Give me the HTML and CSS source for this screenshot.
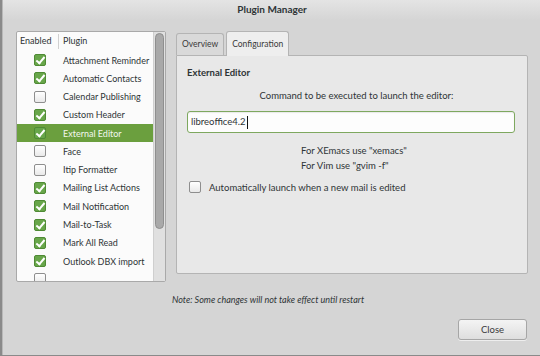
FILE: index.html
```
<!DOCTYPE html>
<html lang="en">
<head>
  <meta charset="UTF-8" />
  <title>Plugin Manager</title>
  <link rel="stylesheet" href="styles.css">
</head>
<body>
  <div class="window">
    <div class="titlebar">Plugin Manager</div>
    <div class="content">
      <div class="plugin-list">
        <div class="list-body">
          <div class="list-head">
            <div class="col-enabled">Enabled</div>
            <div class="col-plugin">Plugin</div>
          </div>
          <div class="row"><span class="cell-check"><span class="check on"></span></span><span>Attachment Reminder</span></div>
          <div class="row"><span class="cell-check"><span class="check on"></span></span><span>Automatic Contacts</span></div>
          <div class="row"><span class="cell-check"><span class="check"></span></span><span>Calendar Publishing</span></div>
          <div class="row"><span class="cell-check"><span class="check on"></span></span><span>Custom Header</span></div>
          <div class="row selected"><span class="cell-check"><span class="check on"></span></span><span>External Editor</span></div>
          <div class="row"><span class="cell-check"><span class="check"></span></span><span>Face</span></div>
          <div class="row"><span class="cell-check"><span class="check"></span></span><span>Itip Formatter</span></div>
          <div class="row"><span class="cell-check"><span class="check on"></span></span><span>Mailing List Actions</span></div>
          <div class="row"><span class="cell-check"><span class="check on"></span></span><span>Mail Notification</span></div>
          <div class="row"><span class="cell-check"><span class="check on"></span></span><span>Mail-to-Task</span></div>
          <div class="row"><span class="cell-check"><span class="check on"></span></span><span>Mark All Read</span></div>
          <div class="row"><span class="cell-check"><span class="check on"></span></span><span>Outlook DBX import</span></div>
          <div class="row"><span class="cell-check"><span class="check"></span></span></div>
        </div>
        <div class="scrollbar"><div class="thumb"></div></div>
      </div>
      <div class="notebook">
        <div class="tabs">
          <div class="tab">Overview</div>
          <div class="tab active">Configuration</div>
        </div>
        <div class="page">
          <div class="section-title">External Editor</div>
          <div class="centered">Command to be executed to launch the editor:</div>
          <div class="entry">libreoffice4.2<span class="caret"></span></div>
          <div class="hints">
            <div>For XEmacs use "xemacs"</div>
            <div>For Vim use "gvim -f"</div>
          </div>
          <label class="option"><span class="check"></span>Automatically launch when a new mail is edited</label>
        </div>
      </div>
    </div>
    <div class="note">Note: Some changes will not take effect until restart</div>
    <div class="footer">
      <button class="btn">Close</button>
    </div>
  </div>
</body>
</html>
```

FILE: styles.css
```
:root {
  --color-window: #d5d5d5;
  --color-page: #e8e8e8;
  --color-border: #a9a9a9;
  --color-text: #2e3436;
  --color-green: #6b9f3e;
  --color-check: #68a64a;
  --font-base: Lato, "Liberation Sans", sans-serif;
}

* {
  box-sizing: border-box;
  margin: 0;
  padding: 0;
}

body {
  width: 540px;
  height: 356px;
  overflow: hidden;
  background: #8a8a8a;
  font-family: var(--font-base);
  font-size: 9.5px;
  color: var(--color-text);
}

.window {
  width: 540px;
  height: 355px;
  margin-left: 2px;
  background: var(--color-window);
  border-left: 1px solid #b8b8b8;
  border-right: 1px solid #eaeaea;
  display: flex;
  flex-direction: column;
}

.titlebar {
  height: 20px;
  padding-top: 3px;
  text-align: center;
  font-weight: 700;
  font-size: 10px;
  color: #2e3436;
  background: linear-gradient(#e4e4e4, #d5d5d5);
}

.content {
  display: flex;
  padding: 11px 0 0 13px;
  height: 262px;
}

/* plugin list */

.plugin-list {
  width: 150px;
  height: 251px;
  display: flex;
  background: #fbfbfb;
  border: 1px solid var(--color-border);
  border-radius: 2px;
  overflow: hidden;
  font-size: 9px;
}

.list-body {
  flex: 1;
  overflow: hidden;
  white-space: nowrap;
}

.list-head {
  display: flex;
  height: 19px;
  line-height: 18px;
}

.col-enabled {
  width: 42px;
  padding-left: 3px;
  border-right: 1px solid #d0d0d0;
  margin: 2px 0;
  line-height: 14px;
}

.col-plugin {
  padding-left: 4px;
  line-height: 18px;
}

.row {
  display: flex;
  align-items: center;
  height: 18.27px;
}

.row.selected {
  background: var(--color-green);
  color: #f2f7ee;
}

.cell-check {
  width: 46px;
  display: flex;
  justify-content: center;
}

.check {
  display: inline-block;
  flex: none;
  width: 12px;
  height: 12px;
  border: 1px solid #8e8e8e;
  border-radius: 2px;
  background: linear-gradient(#ffffff, #e9e9e9);
  position: relative;
}

.check.on {
  background: var(--color-check);
  border-color: #4f8a34;
}

.check.on::after {
  content: "";
  position: absolute;
  left: 3px;
  top: 0px;
  width: 3px;
  height: 7px;
  border: solid #ffffff;
  border-width: 0 2px 2px 0;
  transform: rotate(40deg);
}

.scrollbar {
  width: 12px;
  background: #e0e0e0;
  border-left: 1px solid #cfcfcf;
  padding: 1px 1px 0 1px;
}

.thumb {
  height: 196px;
  background: #a9a9a9;
  border: 1px solid #8f8f8f;
  border-radius: 5px;
}

/* notebook */

.notebook {
  margin-left: 10px;
  width: 352px;
  display: flex;
  flex-direction: column;
}

.tabs {
  display: flex;
  align-items: flex-end;
  gap: 2px;
  height: 24px;
  font-size: 8.5px;
}

.tab {
  height: 22px;
  line-height: 21px;
  padding: 0 5px;
  border: 1px solid #b4b4b4;
  border-bottom: none;
  border-radius: 3px 3px 0 0;
  background: #d9d9d9;
  color: #3a3a3a;
}

.tab.active {
  height: 25px;
  line-height: 24px;
  background: #eeeeee;
  position: relative;
  top: 1px;
  padding: 0 5px;
}

.page {
  height: 219px;
  background: var(--color-page);
  border: 1px solid #b4b4b4;
  border-radius: 0 2px 2px 2px;
  padding: 11px 12px 0 10px;
}

.section-title {
  font-weight: 700;
  height: 23px;
}

.centered {
  text-align: center;
  padding-left: 11px;
  height: 21px;
}

.entry {
  height: 22px;
  border: 1px solid #7ea85f;
  border-radius: 3px;
  background: #fdfdfd;
  line-height: 20px;
  padding-left: 3px;
  box-shadow: inset 0 1px 1px rgba(0, 0, 0, 0.08);
  display: flex;
  align-items: center;
}

.caret {
  display: inline-block;
  width: 1px;
  height: 13px;
  background: #111;
  margin-left: 1px;
}

.hints {
  padding: 10px 0 0 114px;
  line-height: 15px;
  height: 48px;
}

.option {
  display: flex;
  align-items: center;
  gap: 8px;
  padding-left: 2px;
}

/* bottom */

.note {
  padding: 12px 0 0 169px;
  font-style: italic;
  font-size: 9px;
  height: 37px;
}

.footer {
  display: flex;
  justify-content: flex-end;
  padding-right: 14px;
}

.btn {
  width: 69px;
  height: 21px;
  font-family: var(--font-base);
  font-size: 9.5px;
  color: #3a3a3a;
  border: 1px solid #a6a6a6;
  border-radius: 3px;
  background: linear-gradient(#f4f4f4, #dedede);
  box-shadow: 0 1px 0 rgba(255, 255, 255, 0.6);
}
```
